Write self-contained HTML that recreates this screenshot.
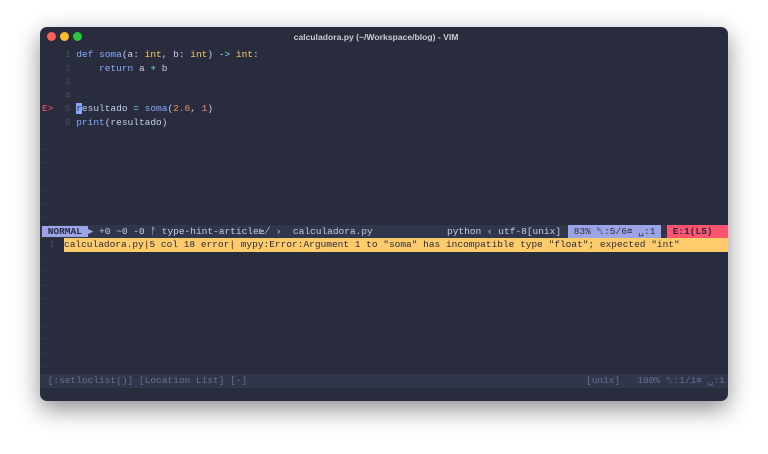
<!DOCTYPE html>
<html><head><style>
body{margin:0;width:768px;height:454px;background:#fff;overflow:hidden;font-family:"Liberation Mono",monospace;}
.win{position:absolute;left:40px;top:27px;width:688px;height:374px;background:#292c3d;border-radius:7px;box-shadow:0 8px 24px rgba(0,0,0,.45);overflow:hidden}
.title{position:absolute;left:-8px;top:0;width:100%;height:20px;text-align:center;font:bold 8.6px "Liberation Sans",sans-serif;color:#c9cbd6;line-height:20px}
.dot{position:absolute;top:5px;width:9px;height:9px;border-radius:50%}
.row{position:absolute;left:0;padding-left:2px;width:686px;height:13.6px;line-height:13.6px;font-size:9.5px;white-space:pre;color:#c6cde6}
.ln{color:#4a4f66}
.t{color:#3c4058}
.kw{color:#82aaff}.ty{color:#ffcb6b}.num{color:#f78c6c}.op{color:#89ddff}
.a{position:absolute;top:0}
</style></head><body>
<div class="win">
<div class="title">calculadora.py (~/Workspace/blog) - VIM</div>
<div class="dot" style="left:7px;background:#fe5f57"></div>
<div class="dot" style="left:20px;background:#febc2e"></div>
<div class="dot" style="left:33px;background:#28c840"></div>

<div class="row" style="top:21px">    <span class="ln">1</span> <span class="kw">def</span> <span class="kw">soma</span>(a: <span class="ty">int</span>, b: <span class="ty">int</span>) <span class="op">-&gt;</span> <span class="ty">int</span>:</div>
<div class="row" style="top:34.6px">    <span class="ln">2</span>     <span class="kw">return</span> a <span class="op">+</span> b</div>
<div class="row" style="top:48.2px">    <span class="ln">3</span></div>
<div class="row" style="top:61.8px">    <span class="ln">4</span></div>
<div class="row" style="top:75.4px"><span style="color:#ff5370">E&gt;</span>  <span class="ln">5</span> <span style="background:#82aaff;color:#292c3d">r</span>esultado <span class="op">=</span> <span class="kw">soma</span>(<span class="num">2.6</span>, <span class="num">1</span>)</div>
<div class="row" style="top:89px">    <span class="ln">6</span> <span class="kw">print</span>(resultado)</div>
<div class="row t" style="top:102.6px">~</div>
<div class="row t" style="top:116.2px">~</div>
<div class="row t" style="top:129.8px">~</div>
<div class="row t" style="top:143.4px">~</div>
<div class="row t" style="top:157px">~</div>
<div class="row t" style="top:170.6px">~</div>
<div class="row t" style="top:184.2px">~</div>

<div class="row" style="top:197.6px;background:#32364b;color:#c6cde6"><span style="background:#9ba4e6;color:#292c3d;font-weight:bold"> NORMAL </span><span style="color:#9ba4e6">▶</span> +0 ~0 -0 ᚠ type-hint-article⋭ ›  calculadora.py<span class="a" style="left:407px">python ‹ utf-8[unix] </span><span class="a" style="left:528px;background:#9ba4e6;color:#292c3d"> 83% ␤:5/6≡ ␣:1 </span><span class="a" style="left:627px;width:61px;background:#ff5370;color:#292c3d;font-weight:bold"> E:1(L5)</span></div>
<div class="row" style="top:211.2px"><span class="a ln" style="left:9px">1</span><span class="a" style="left:24px;width:664px;background:#ffcb6b;color:#292c3d">calculadora.py|5 col 18 error| mypy:Error:Argument 1 to "soma" has incompatible type "float"; expected "int"</span></div>
<div class="row t" style="top:224.8px">~</div>
<div class="row t" style="top:238.4px">~</div>
<div class="row t" style="top:252px">~</div>
<div class="row t" style="top:265.6px">~</div>
<div class="row t" style="top:279.2px">~</div>
<div class="row t" style="top:292.8px">~</div>
<div class="row t" style="top:306.4px">~</div>
<div class="row t" style="top:320px">~</div>
<div class="row t" style="top:333.6px">~</div>
<div class="row" style="top:347.2px;background:#32364b;color:#676e95"> [:setloclist()] [Location List] [-]<span class="a" style="left:546px">[unix]   100% ␤:1/1≡ ␣:1</span></div>
</div>
</body></html>
